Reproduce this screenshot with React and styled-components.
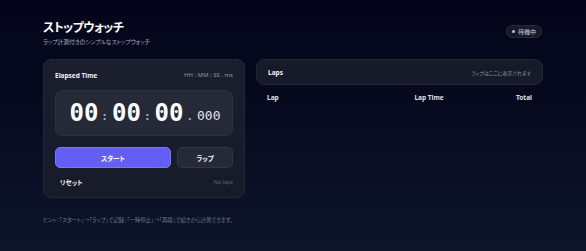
import React from "react";
import styled, { createGlobalStyle } from "styled-components";

const Global = createGlobalStyle`
  html, body { margin: 0; padding: 0; }
  body {
    min-height: 251px;
    background: linear-gradient(180deg, #04051a 0%, #070a1e 45%, #0d152b 100%);
    font-family: "Noto Sans", "Noto Sans CJK JP", sans-serif;
    color: #e8ebf4;
  }
  #root { min-height: 251px; }
`;

const Page = styled.div`
  width: 500px;
  margin: 0 auto;
  padding-top: 13px;
  box-sizing: border-box;
  min-height: 251px;
`;

const Header = styled.header`
  display: flex;
  justify-content: space-between;
  align-items: center;
  height: 46px;
`;

const TitleBlock = styled.div`
  display: flex;
  flex-direction: column;
  gap: 2px;
  margin-top: -8px;
`;

const Title = styled.h1`
  margin: 0;
  font-family: "Noto Sans CJK JP", sans-serif;
  font-feature-settings: "palt";
  font-size: 12px;
  line-height: 18px;
  font-weight: 700;
  color: #ffffff;
  letter-spacing: -0.6px;
`;

const Subtitle = styled.p`
  margin: 0;
  font-family: "Noto Sans CJK JP", sans-serif;
  font-feature-settings: "palt";
  font-size: 5.7px;
  line-height: 8px;
  color: #aab1c7;
`;

const Badge = styled.div`
  display: flex;
  align-items: center;
  gap: 3px;
  height: 11px;
  padding: 0 5px 0 5px;
  border-radius: 6px;
  background: #171a2a;
  border: 1px solid #262a3b;
  font-family: "Noto Sans CJK JP", sans-serif;
  font-size: 6px;
  color: #c9cedd;
  margin-top: -9px;
  margin-right: 1px;
`;

const Dot = styled.span`
  width: 3px;
  height: 3px;
  border-radius: 50%;
  background: #b9c0d4;
`;

const Main = styled.main`
  display: grid;
  grid-template-columns: 202px 1fr;
  gap: 11px;
  align-items: start;
`;

const Card = styled.section`
  box-sizing: border-box;
  height: 139px;
  border-radius: 8px;
  background: linear-gradient(180deg, #1b1e2d 0%, #171a28 100%);
  border: 1px solid #232738;
  padding: 0 11px;
  display: flex;
  flex-direction: column;
`;

const CardHead = styled.div`
  display: flex;
  justify-content: space-between;
  align-items: center;
  height: 30px;
`;

const Label = styled.span`
  font-size: ${(p) => p.size || 6.5}px;
  font-weight: ${(p) => (p.bold ? 700 : 400)};
  color: ${(p) => p.color || "#eef0f6"};
  font-family: ${(p) => (p.jp ? '"Noto Sans CJK JP", sans-serif' : '"Noto Sans", "Noto Sans CJK JP", sans-serif')};
  font-feature-settings: "palt";
  padding-left: ${(p) => p.pl || 0}px;
`;

const TimerBox = styled.div`
  height: 46px;
  border-radius: 7px;
  background: #262937;
  border: 1px solid #2c3040;
  box-sizing: border-box;
  display: flex;
  align-items: center;
  justify-content: center;
  font-family: "DejaVu Sans Mono", monospace;
  font-weight: 700;
  color: #ffffff;
  padding-left: 2px;
`;

const Big = styled.span`
  font-size: 24px;
  line-height: 1;
`;

const Sep = styled.span`
  font-size: 11px;
  color: #a7aec2;
  margin: 6px 4px 0 3px;
  align-self: center;
`;

const Ms = styled.span`
  font-size: 13px;
  color: #e2e5ee;
  margin-top: 4px;
  font-weight: 400;
`;

const Buttons = styled.div`
  display: grid;
  grid-template-columns: 1fr 56px;
  gap: 6px;
  margin-top: 11px;
`;

const Button = styled.button`
  height: 21px;
  border-radius: 5px;
  border: 1px solid ${(p) => (p.primary ? "#7b76ff" : "#32364a")};
  background: ${(p) => (p.primary ? "#655ef6" : "#262938")};
  color: #ffffff;
  font-family: "Noto Sans CJK JP", sans-serif;
  font-feature-settings: "palt";
  font-size: 6.5px;
  font-weight: 700;
  padding: 0;
  cursor: pointer;
`;

const Footer = styled.div`
  display: flex;
  justify-content: space-between;
  align-items: center;
  height: 28px;
`;

const LapsHead = styled.div`
  box-sizing: border-box;
  height: 26px;
  border-radius: 8px;
  background: #171a28;
  border: 1px solid #22263a;
  display: flex;
  justify-content: space-between;
  align-items: center;
  padding: 0 11px;
`;

const Cols = styled.div`
  display: grid;
  grid-template-columns: 1fr 1fr 1fr;
  padding: 0 11px;
  margin-top: 6px;
  height: 12px;
  align-items: center;
`;

const Col = styled.span`
  text-align: ${(p) => p.align || "left"};
  font-size: 6.5px;
  font-weight: 700;
  color: #dde1ec;
`;

const Hint = styled.p`
  margin: 18px 0 0;
  font-family: "Noto Sans CJK JP", sans-serif;
  font-feature-settings: "palt";
  font-size: 5.4px;
  color: #6f7893;
`;

export default function App() {
  return (
    <>
      <Global />
      <Page>
        <Header>
          <TitleBlock>
            <Title>ストップウォッチ</Title>
            <Subtitle>ラップ計測付きのシンプルなストップウォッチ</Subtitle>
          </TitleBlock>
          <Badge>
            <Dot />
            待機中
          </Badge>
        </Header>
        <Main>
          <Card>
            <CardHead>
              <Label bold>Elapsed Time</Label>
              <Label size={6} color="#8d95aa">HH : MM : SS . ms</Label>
            </CardHead>
            <TimerBox>
              <Big>00</Big>
              <Sep>:</Sep>
              <Big>00</Big>
              <Sep>:</Sep>
              <Big>00</Big>
              <Sep>.</Sep>
              <Ms>000</Ms>
            </TimerBox>
            <Buttons>
              <Button primary>スタート</Button>
              <Button>ラップ</Button>
            </Buttons>
            <Footer>
              <Label bold jp pl={5}>リセット</Label>
              <Label size={5.5} color="#5d657c">No laps</Label>
            </Footer>
          </Card>
          <div>
            <LapsHead>
              <Label bold>Laps</Label>
              <Label jp size={5} color="#8b92a8">ラップはここに表示されます</Label>
            </LapsHead>
            <Cols>
              <Col>Lap</Col>
              <Col align="right">Lap Time</Col>
              <Col align="right">Total</Col>
            </Cols>
          </div>
        </Main>
        <Hint>ヒント：「スタート」→「ラップ」で記録、「一時停止」→「再開」で続きから計測できます。</Hint>
      </Page>
    </>
  );
}
